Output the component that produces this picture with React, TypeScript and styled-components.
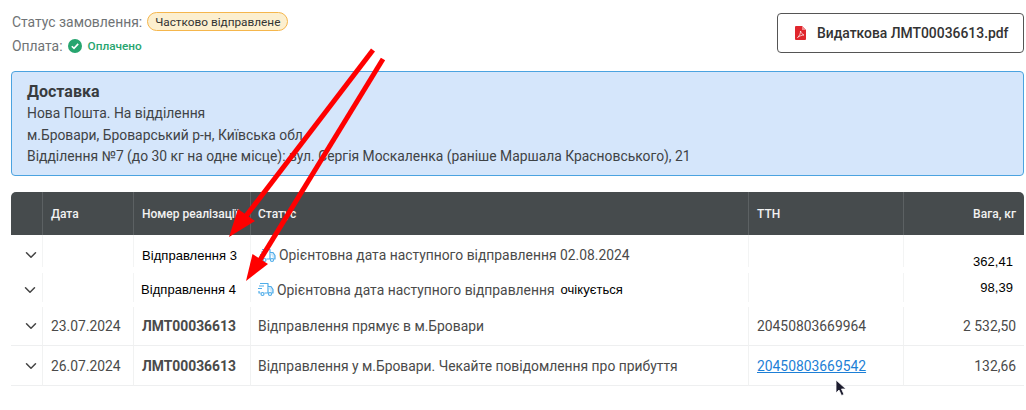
import { ChevronDown } from "lucide-react";
import styled, { createGlobalStyle } from "styled-components";

const GlobalStyle = createGlobalStyle`
  html, body { margin: 0; background: #fff; }
  body { font-family: Roboto, "Liberation Sans", sans-serif; color: #444; overflow: hidden; }
`;

const Page = styled.div`
  position: relative;
  width: 1026px;
  height: 410px;
  padding: 12px 2px 0 11px;
  box-sizing: border-box;
`;

const TopBar = styled.div`
  display: flex;
  justify-content: space-between;
  align-items: flex-start;
  height: 59px;
`;

const StatusList = styled.div`
  display: flex;
  flex-direction: column;
  gap: 5px;
  padding-left: 1px;
`;

const StatusRow = styled.div`
  display: flex;
  align-items: center;
  height: 19px;
  gap: 5px;
  font-size: 13.9px;
  color: #6f7375;
`;

const Pill = styled.span`
  height: 19px;
  box-sizing: border-box;
  padding: 0 7px;
  display: flex;
  align-items: center;
  border: 1px solid #f5b64c;
  border-radius: 10px;
  background: #fcefcf;
  color: #333;
  font-size: 11.8px;
`;

const Paid = styled.span`
  color: #27a56f;
  font-size: 11.8px;
  font-weight: 500;
  margin-left: 1px;
`;

const FileButton = styled.button`
  display: flex;
  align-items: center;
  gap: 11px;
  width: 247px;
  height: 40px;
  margin: 1px 0 0;
  padding: 0 0 0 17px;
  border: 1px solid #555;
  border-radius: 4px;
  background: #fff;
  color: #333;
  font-family: inherit;
  font-size: 13.9px;
  font-weight: 500;
`;

const Delivery = styled.section`
  box-sizing: border-box;
  height: 105px;
  padding: 8px 15px;
  background: #d5e6fb;
  border: 1px solid #4ba3e0;
  border-radius: 4px;
  color: #3f4346;
  font-size: 13.87px;
`;

const DeliveryTitle = styled.div`
  font-size: 16px;
  font-weight: 700;
  line-height: 23px;
  color: #383c3f;
`;

const DeliveryLine = styled.div`
  line-height: 21.5px;
`;

const Table = styled.div`
  margin-top: 16px;
  display: grid;
  grid-template-columns: 32px 91px 117px 498px 155px 120px;
`;

const HeadCell = styled.div<{ $right?: boolean; $tight?: boolean }>`
  box-sizing: border-box;
  height: 43px;
  padding: 0 8px 0 ${(p) => (p.$tight ? 7 : 8)}px;
  display: flex;
  align-items: center;
  justify-content: ${(p) => (p.$right ? "flex-end" : "flex-start")};
  background: #464b4d;
  border-right: 1px solid #5c6163;
  color: #f2f2f2;
  font-size: 12px;
  font-weight: 500;
  white-space: nowrap;
  overflow: hidden;

  &:first-child { border-top-left-radius: 5px; }
  &:nth-child(6) { border-top-right-radius: 5px; border-right: 0; }
`;

const Cell = styled.div<{ $h: number; $right?: boolean; $bold?: boolean; $tight?: boolean }>`
  box-sizing: border-box;
  height: ${(p) => p.$h}px;
  padding: 0 8px 0 ${(p) => (p.$tight ? 7 : 8)}px;
  display: flex;
  align-items: center;
  justify-content: ${(p) => (p.$right ? "flex-end" : "flex-start")};
  border-right: 1px solid #f1f2f2;
  border-bottom: 1px solid #eeeff0;
  font-size: 13.87px;
  font-weight: ${(p) => (p.$bold ? 700 : 400)};
  color: #4a4a4a;
  white-space: nowrap;

  &:nth-child(6n) { border-right: 0; }
`;

/* rows 3 and 4 were pasted over in the shot, so their cell edges are broken */
const PastedCell = styled.div<{ $h: number; $right?: boolean; $pt?: number; $pb?: number; $line?: number }>`
  position: relative;
  box-sizing: border-box;
  height: ${(p) => p.$h}px;
  padding: ${(p) => p.$pt ?? 0}px ${(p) => (p.$right ? 11 : 8)}px ${(p) => p.$pb ?? 0}px 8px;
  display: flex;
  align-items: center;
  justify-content: ${(p) => (p.$right ? "flex-end" : "flex-start")};
  font-size: 13.87px;
  color: #4a4a4a;
  white-space: nowrap;

  &::after {
    content: "";
    position: absolute;
    top: ${(p) => (p.$line ? 1 : 0)}px;
    right: 0;
    width: 1px;
    height: ${(p) => p.$line ?? 32}px;
    background: #f3f4f4;
  }

  &:nth-child(6n)::after { display: none; }
`;

const PastedText = styled.span<{ $left?: number }>`
  font-family: "Liberation Sans", Arial, sans-serif;
  font-size: 13px;
  letter-spacing: 0.05px;
  color: #000;
  margin-left: ${(p) => p.$left ?? 0}px;
`;

const Eta = styled.span<{ $left?: number }>`
  display: flex;
  align-items: center;
  gap: 3px;
  margin-left: ${(p) => p.$left ?? 0}px;
`;

const Arrows = styled.svg`
  position: absolute;
  inset: 0;
  pointer-events: none;
`;

const Cursor = styled.svg`
  position: absolute;
  left: 835px;
  top: 379px;
`;

const TtnLink = styled.a`
  color: #1d7fd6;
  text-decoration: underline;
`;

const ToggleIcon = styled(ChevronDown)<{ $left?: number }>`
  margin-left: ${(p) => p.$left ?? 3}px;
  flex: none;
  color: #444;
`;

const Toggle = ({ left }: { left?: number }) => <ToggleIcon $left={left} size={18} strokeWidth={2} />;

const TruckIcon = () => (
  <svg width="16" height="15" viewBox="0 0 16 15" fill="none" stroke="#4fade9" strokeWidth="1.200">
    <path d="M2 1.500h8v9.500H6.500M2.500 11H1V9M1 4h5M0 6.500h4" strokeLinejoin="round" />
    <path d="M10 4.500h3l2 3v3.500h-1.500M10 11h.5" fill="#cfe8fa" strokeLinejoin="round" />
    <circle cx="4.500" cy="12" r="1.500" />
    <circle cx="12" cy="12" r="1.500" />
  </svg>
);

const PdfIcon = () => (
  <svg width="11" height="14" viewBox="0 0 11 14">
    <path d="M0 1a1 1 0 0 1 1-1h6l4 4v9a1 1 0 0 1-1 1H1a1 1 0 0 1-1-1z" fill="#e0262d" />
    <path d="M7 0l4 4H7z" fill="#f08a8d" />
    <path d="M2.500 11.500c2-1.500 3-4 3-6.500 1 2.500 2 3.500 3.500 4-2 0-4.500 1-6.500 2.500z" fill="none" stroke="#fff" strokeWidth=".7" />
  </svg>
);

const CheckIcon = () => (
  <svg width="14" height="14" viewBox="0 0 14 14">
    <circle cx="7" cy="7" r="7" fill="#27a56f" />
    <path d="M3.800 7.200l2.200 2.200 4.200-4.500" fill="none" stroke="#fff" strokeWidth="1.600" />
  </svg>
);

const App = () => (
  <Page>
    <GlobalStyle />
    <TopBar>
      <StatusList>
        <StatusRow>
          Статус замовлення: <Pill>Частково відправлене</Pill>
        </StatusRow>
        <StatusRow>
          Оплата: <CheckIcon /> <Paid>Оплачено</Paid>
        </StatusRow>
      </StatusList>
      <FileButton>
        <PdfIcon />
        Видаткова ЛМТ00036613.pdf
      </FileButton>
    </TopBar>
    <Delivery>
      <DeliveryTitle>Доставка</DeliveryTitle>
      <DeliveryLine>Нова Пошта. На відділення</DeliveryLine>
      <DeliveryLine>м.Бровари, Броварський р-н, Київська обл.</DeliveryLine>
      <DeliveryLine>Відділення №7 (до 30 кг на одне місце): вул. Сергія Москаленка (раніше Маршала Красновського), 21</DeliveryLine>
    </Delivery>
    <Table>
      <HeadCell />
      <HeadCell>Дата</HeadCell>
      <HeadCell>Номер реалізації</HeadCell>
      <HeadCell $tight>Статус</HeadCell>
      <HeadCell>ТТН</HeadCell>
      <HeadCell $right>Вага, кг</HeadCell>

      <PastedCell $h={37} $pt={3}><Toggle /></PastedCell>
      <PastedCell $h={37} />
      <PastedCell $h={37} $pt={3}><PastedText>Відправлення 3</PastedText></PastedCell>
      <PastedCell $h={37} $pt={3}>
        <Eta $left={1}><TruckIcon /> Орієнтовна дата наступного відправлення 02.08.2024</Eta>
      </PastedCell>
      <PastedCell $h={37} />
      <PastedCell $h={37} $right $pt={15}><PastedText>362,41</PastedText></PastedCell>

      <PastedCell $h={35} $line={29}><Toggle left={2} /></PastedCell>
      <PastedCell $h={35} $line={29} />
      <PastedCell $h={35} $line={29}><PastedText $left={-1}>Відправлення 4</PastedText></PastedCell>
      <PastedCell $h={35} $line={29}>
        <Eta $left={-1}><TruckIcon /> Орієнтовна дата наступного відправлення <PastedText $left={3}>очікується</PastedText></Eta>
      </PastedCell>
      <PastedCell $h={35} $line={29} />
      <PastedCell $h={35} $line={29} $right $pb={5}><PastedText>98,39</PastedText></PastedCell>

      <Cell $h={39}><Toggle /></Cell>
      <Cell $h={39}>23.07.2024</Cell>
      <Cell $h={39} $bold>ЛМТ00036613</Cell>
      <Cell $h={39} $tight>Відправлення прямує в м.Бровари</Cell>
      <Cell $h={39}>20450803669964</Cell>
      <Cell $h={39} $right>2 532,50</Cell>

      <Cell $h={40}><Toggle /></Cell>
      <Cell $h={40}>26.07.2024</Cell>
      <Cell $h={40} $bold>ЛМТ00036613</Cell>
      <Cell $h={40} $tight>Відправлення у м.Бровари. Чекайте повідомлення про прибуття</Cell>
      <Cell $h={40}><TtnLink href="#">20450803669542</TtnLink></Cell>
      <Cell $h={40} $right>132,66</Cell>
    </Table>
    <Arrows width="1026" height="410" viewBox="0 0 1026 410">
      <path d="M373 50L246 216" stroke="#f00" strokeWidth="5" fill="none" />
      <path d="M229 237L238 209L255 221z" fill="#f00" />
      <path d="M383 59L260 260" stroke="#f00" strokeWidth="5" fill="none" />
      <path d="M246 281L252.500 254L268 264z" fill="#f00" />
    </Arrows>
    <Cursor width="12" height="18" viewBox="0 0 12 18">
      <path d="M1 1v13l3-3 2.500 5.500 2.500-1-2.500-5.500h4.500z" fill="#1c1c2e" stroke="#fff" strokeWidth=".8" />
    </Cursor>
  </Page>
);

export default App;
